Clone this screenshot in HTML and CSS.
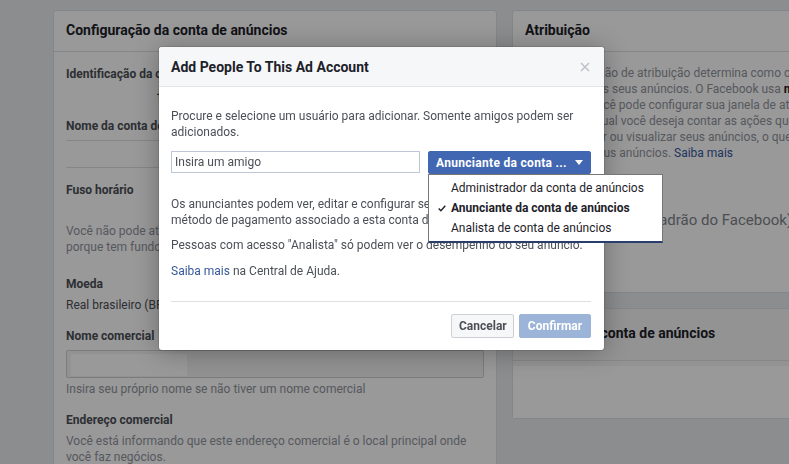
FILE: index.html
```html
<!DOCTYPE html>
<html lang="pt-BR">
<head>
    <meta charset="UTF-8">
    <meta name="viewport" content="width=device-width, initial-scale=1.0">
    <title>Configurações da conta de anúncios</title>
    <link rel="stylesheet" href="styles.css">
</head>
<body>
    <div class="page">
        <!-- Coluna da esquerda -->
        <section class="card card-main">
            <div class="card-head">Configuração da conta de anúncios</div>
            <div class="card-body">
                <div class="label lb-id">Identificação da conta de anúncios</div>
                <div class="value-id">1234567890</div>
                <div class="label lb-name">Nome da conta de anúncios</div>
                <div class="rule rule-1"></div>
                <div class="rule rule-2"></div>
                <div class="label lb-tz">Fuso horário</div>
                <p class="hint hint-tz">Você não pode atualizar o fuso horário ou a moeda da conta de anúncios<br>porque tem fundos pré-pagos nesta conta.</p>
                <div class="label lb-cur">Moeda</div>
                <div class="value">Real brasileiro (BRL)</div>
                <div class="label lb-biz">Nome comercial</div>
                <div class="field"><span class="redacted"></span></div>
                <p class="hint hint-biz">Insira seu próprio nome se não tiver um nome comercial</p>
                <div class="label lb-addr">Endereço comercial</div>
                <p class="hint hint-addr">Você está informando que este endereço comercial é o local principal onde você faz negócios.</p>
            </div>
        </section>

        <!-- Coluna da direita -->
        <div class="side">
            <section class="card card-attr">
                <div class="card-head">Atribuição</div>
                <div class="card-body">
                    <p class="attr-text">Sua configuração de atribuição determina como o Facebook atribui<br>conversões aos seus anúncios. O Facebook usa <b>modelo de último toque</b><br>por padrão. Você pode configurar sua janela de atribuição para<br>o período no qual você deseja contar as ações que as pessoas<br>fazem ao clicar ou visualizar seus anúncios, o que ajuda a medir<br>o efeito dos seus anúncios. <a href="#">Saiba mais</a></p>
                    <div class="attr-window">Janela de 28 dias (padrão do Facebook)</div>
                </div>
            </section>
            <section class="card card-limit">
                <div class="card-head head-tall">Funções da conta de anúncios</div>
                <div class="card-body limit-body">
                    <div class="limit-box"></div>
                </div>
            </section>
        </div>
    </div>

    <div class="overlay"></div>

    <!-- Caixa de diálogo -->
    <div class="dialog">
        <div class="dialog-head">
            <span>Add People To This Ad Account</span>
            <svg class="close" width="10" height="10" viewBox="0 0 10 10">
                <path d="M1 1L9 9M9 1L1 9" stroke="#bec2c9" stroke-width="1.6" fill="none"/>
            </svg>
        </div>
        <div class="dialog-body">
            <p>Procure e selecione um usuário para adicionar. Somente amigos podem ser adicionados.</p>
            <div class="pick-row">
                <input type="text" class="friend-input" placeholder="Insira um amigo">
                <div class="role">
                    <button type="button" class="role-btn">Anunciante da conta ... <span class="caret"></span></button>
                    <ul class="role-menu">
                        <li>Administrador da conta de anúncios</li>
                        <li class="checked">
                            <svg class="check" width="8" height="7" viewBox="0 0 8 7">
                                <path d="M0.7 3.6L2.9 5.8L7.3 0.8" stroke="#1d2129" stroke-width="1.4" fill="none"/>
                            </svg>
                            Anunciante da conta de anúncios
                        </li>
                        <li>Analista de conta de anúncios</li>
                    </ul>
                </div>
            </div>
            <p class="p-adv">Os anunciantes podem ver, editar e configurar seus anúncios usando o<br>método de pagamento associado a esta conta de anúncios.</p>
            <p class="p-an">Pessoas com acesso "Analista" só podem ver o desempenho do seu anúncio.</p>
            <p class="p-help"><a href="#">Saiba mais</a> na Central de Ajuda.</p>
        </div>
        <div class="dialog-foot">
            <button type="button" class="btn btn-cancel">Cancelar</button>
            <button type="button" class="btn btn-confirm">Confirmar</button>
        </div>
    </div>
</body>
</html>
```

FILE: styles.css
```css
/* Estilos básicos */
* {
    margin: 0;
    padding: 0;
    box-sizing: border-box;
}

html, body {
    height: 100%;
    overflow: hidden;
}

body {
    background-color: #e9ebee;
    font-family: Roboto, "Liberation Sans", Arial, sans-serif;
    font-size: 12px;
    line-height: 16px;
    color: #1d2129;
}

a {
    color: #365899;
    text-decoration: none;
}

/* Página de fundo */
.page {
    display: flex;
    gap: 15px;
    padding: 10px 0 0 53px;
}

.card {
    width: 444px;
    flex-shrink: 0;
    background-color: #fff;
    border: 1px solid #dddfe2;
    border-radius: 3px;
}

.card-head {
    height: 41px;
    padding: 0 12px 3px;
    display: flex;
    align-items: center;
    border-bottom: 1px solid #dddfe2;
    font-size: 14px;
    font-weight: bold;
    color: #1d2129;
}

.card-body {
    padding: 0 12px;
}

.card-main {
    height: 520px;
}

.label {
    font-weight: bold;
    color: #4b4f56;
}

.lb-id { margin-top: 14px; }
.value-id { margin: 8px 0 0 90px; color: #1d2129; }
.lb-name { margin-top: 12px; }

.rule {
    border-top: 1px solid #dddfe2;
}

.rule-1 { margin-top: 6px; }
.rule-2 { margin-top: 26px; }
.lb-tz { margin-top: 14px; }

.hint {
    color: #90949c;
}

.hint-tz { margin-top: 25px; }
.lb-cur { margin-top: 21px; }

.value {
    margin-top: 5px;
    color: #4b4f56;
}

.lb-biz { margin-top: 15px; }

.field {
    height: 28px;
    margin-top: 6px;
    padding: 3px 4px;
    border: 1px solid #ccd0d5;
    border-radius: 2px;
    background-color: #f3f4f6;
}

.redacted {
    display: block;
    width: 116px;
    height: 22px;
    background-color: #fff;
}

.hint-biz { margin-top: 3px; }
.lb-addr { margin-top: 15px; }
.hint-addr { margin-top: 5px; }

/* Coluna da direita */
.side {
    display: flex;
    flex-direction: column;
    gap: 15px;
}

.card-attr {
    height: 283px;
}

.attr-text {
    margin-top: 13px;
    white-space: nowrap;
    color: #90949c;
}

.attr-text b {
    color: #1d2129;
}

.attr-window {
    margin-top: 49px;
    font-size: 15px;
    line-height: 20px;
    color: #7f838a;
    white-space: nowrap;
}

.head-tall {
    height: 52px;
}

.card-limit {
    background-color: #f5f6f7;
}

.limit-body {
    padding: 5px 0 0;
}

.limit-box {
    height: 52px;
    background-color: #fff;
}

/* Camada escura */
.overlay {
    position: fixed;
    top: 0;
    left: 0;
    right: 0;
    bottom: 0;
    background-color: rgba(0, 0, 0, 0.4);
}

/* Diálogo */
.dialog {
    position: absolute;
    left: 159px;
    top: 47px;
    width: 445px;
    background-color: #fff;
    border-radius: 3px;
    box-shadow: 0 2px 26px rgba(0, 0, 0, 0.3), 0 0 0 1px rgba(0, 0, 0, 0.1);
    color: #4b4f56;
}

.dialog-head {
    height: 40px;
    padding: 0 14px 0 12px;
    display: flex;
    align-items: center;
    justify-content: space-between;
    background-color: #f6f7f9;
    border-bottom: 1px solid #e5e5e5;
    border-radius: 3px 3px 0 0;
    font-size: 14px;
    font-weight: bold;
    color: #1d2129;
}

.dialog-body {
    padding: 21px 13px 22px 12px;
}

.pick-row {
    display: flex;
    gap: 8px;
    margin-top: 11px;
}

.friend-input {
    flex: 1;
    height: 22px;
    padding: 0 3px;
    border: 1px solid #bdc7d8;
    font-family: inherit;
    font-size: 12px;
    color: #1d2129;
}

.friend-input::placeholder {
    color: #4b4f56;
}

.role {
    position: relative;
}

.role-btn {
    width: 163px;
    height: 23px;
    padding: 0 7px 0 7px;
    display: flex;
    align-items: center;
    justify-content: space-between;
    background-color: #4267b2;
    border: 1px solid #4267b2;
    border-radius: 2px;
    font-family: inherit;
    font-size: 12px;
    font-weight: bold;
    letter-spacing: 0.3px;
    color: #fff;
}

.caret {
    width: 0;
    height: 0;
    border-left: 4px solid transparent;
    border-right: 4px solid transparent;
    border-top: 5px solid #fff;
}

.role-menu {
    position: absolute;
    top: 100%;
    left: 0;
    width: 235px;
    padding: 3px 0 3px;
    list-style: none;
    background-color: #fff;
    border: 1px solid #777;
    border-bottom: 2px solid #293e6a;
    z-index: 2;
}

.role-menu li {
    position: relative;
    height: 20px;
    line-height: 20px;
    padding-left: 22px;
    color: #1d2129;
    white-space: nowrap;
}

.role-menu .checked {
    font-weight: bold;
}

.check {
    position: absolute;
    left: 9px;
    top: 7px;
}

.p-adv { margin-top: 22px; }
.p-an { margin-top: 9px; }
.p-help { margin-top: 10px; }

.dialog-foot {
    margin: 0 13px 0 12px;
    padding: 12px 0;
    display: flex;
    justify-content: flex-end;
    gap: 5px;
    border-top: 1px solid #dddfe2;
}

.btn {
    height: 24px;
    padding: 0 7px;
    border-radius: 2px;
    font-family: inherit;
    font-size: 12px;
    font-weight: bold;
}

.btn-cancel {
    width: 63px;
    background-color: #f6f7f9;
    border: 1px solid #ced0d4;
    color: #4b4f56;
}

.btn-confirm {
    width: 72px;
    background-color: #9cb4d8;
    border: 1px solid #9cb4d8;
    color: #fff;
}
```
